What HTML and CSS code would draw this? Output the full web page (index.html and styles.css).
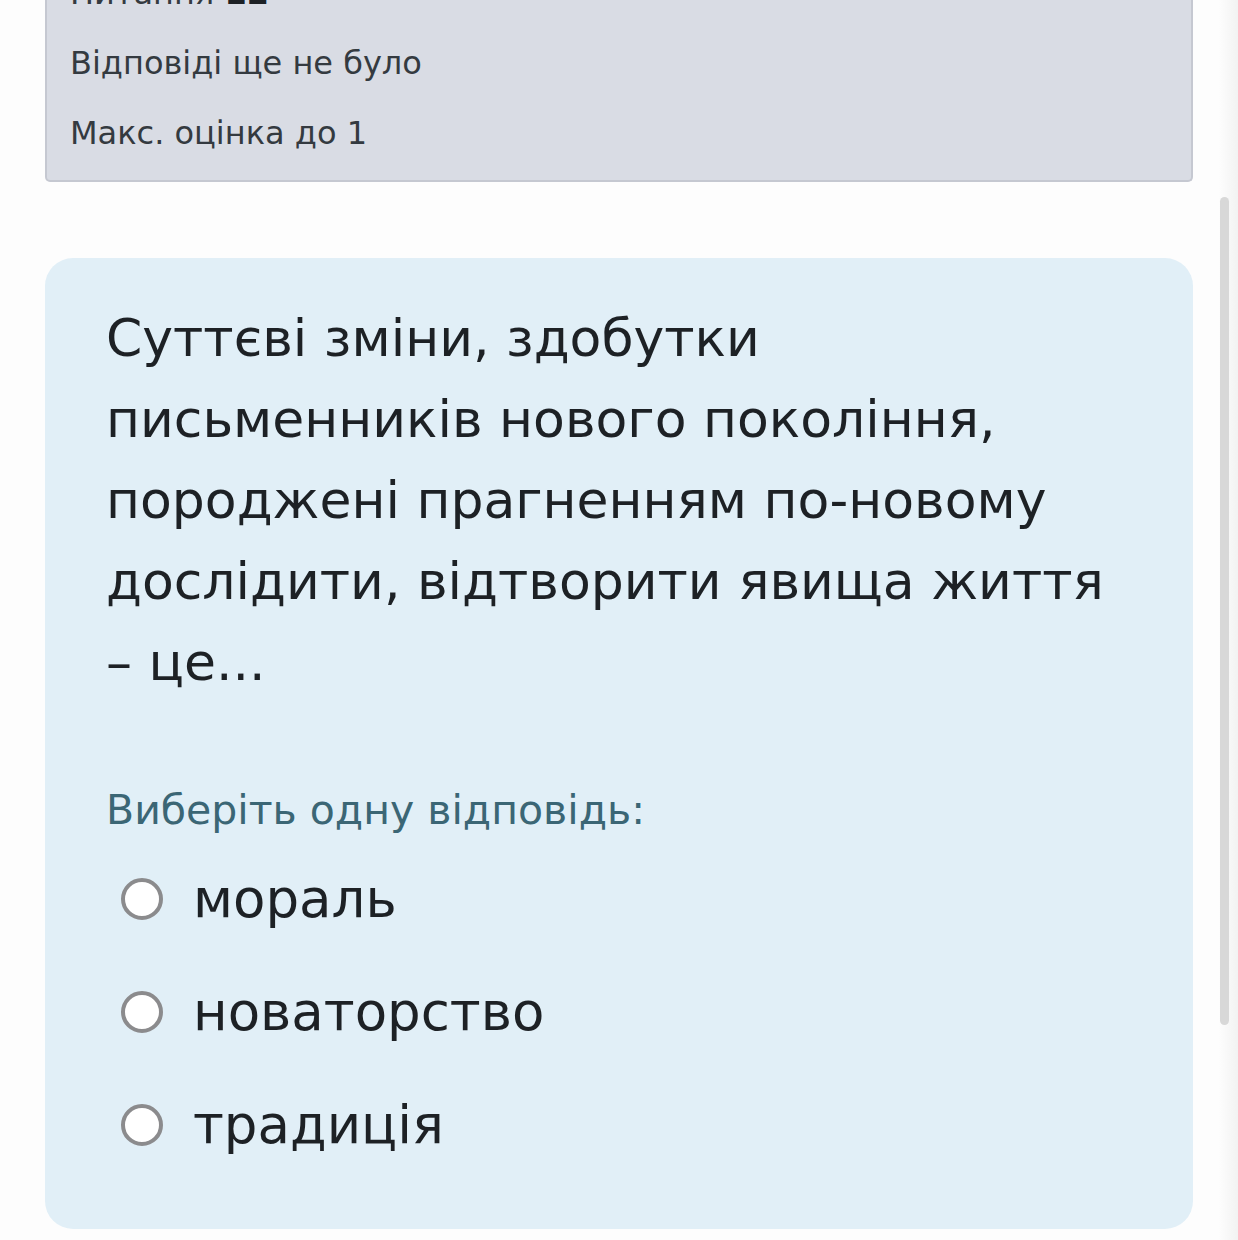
FILE: index.html
```html
<!DOCTYPE html>
<html lang="uk">
<head>
  <meta charset="UTF-8" />
  <meta name="viewport" content="width=device-width, initial-scale=1.0"/>
  <title>Питання 12</title>
  <link rel="stylesheet" href="styles.css">
</head>
<body>

<div class="page">
  <div class="info">
    <p class="info-title">Питання <strong>12</strong></p>
    <p>Відповіді ще не було</p>
    <p>Макс. оцінка до 1</p>
  </div>

  <div class="question">
    <p class="qtext">Суттєві зміни, здобутки письменників нового покоління, породжені прагненням по-новому дослідити, відтворити явища життя – це...</p>

    <p class="prompt">Виберіть одну відповідь:</p>

    <label class="option"><span class="radio"></span>мораль</label>
    <label class="option"><span class="radio"></span>новаторство</label>
    <label class="option"><span class="radio"></span>традиція</label>
  </div>
</div>

<div class="scrollbar"><div class="thumb"></div></div>

</body>
</html>
```

FILE: styles.css
```css
body {
  font-family: 'DejaVu Sans', sans-serif;
  background: #fdfdfd;
  color: #1d2125;
  margin: 0;
  overflow: hidden;
}
.page {
  padding: 0 45px;
}
.info {
  margin-top: -60px;
  padding: 18px 23px 12px;
  background: #d9dce4;
  border: 2px solid #c5c8d1;
  border-top: none;
  border-radius: 0 0 5px 5px;
  color: #343a40;
}
.info p {
  margin: 0;
  font-size: 32px;
  line-height: 70px;
}
.info strong {
  color: #1d2125;
}
.question {
  margin-top: 76px;
  padding: 40px 56px 48px 61px;
  background: #e1eff7;
  border-radius: 28px;
}
.qtext {
  margin: 0;
  font-size: 52px;
  line-height: 81px;
}
.prompt {
  margin: 77px 0 2px;
  font-size: 41px;
  line-height: 60px;
  color: #3b6675;
}
.option {
  display: flex;
  align-items: center;
  gap: 30px;
  padding-left: 15px;
  font-size: 53px;
  line-height: 113px;
}
.radio {
  width: 34px;
  height: 34px;
  border: 4px solid #8b8b8d;
  border-radius: 50%;
  background: #fff;
  flex: none;
}
.scrollbar {
  position: fixed;
  top: 0;
  right: 0;
  width: 19px;
  height: 100%;
  background: linear-gradient(to right, #fdfdfd, #f2f2f2);
}
.thumb {
  position: absolute;
  top: 197px;
  left: 1px;
  width: 9px;
  height: 828px;
  background: #d8d8d8;
  border-radius: 5px;
}
```
